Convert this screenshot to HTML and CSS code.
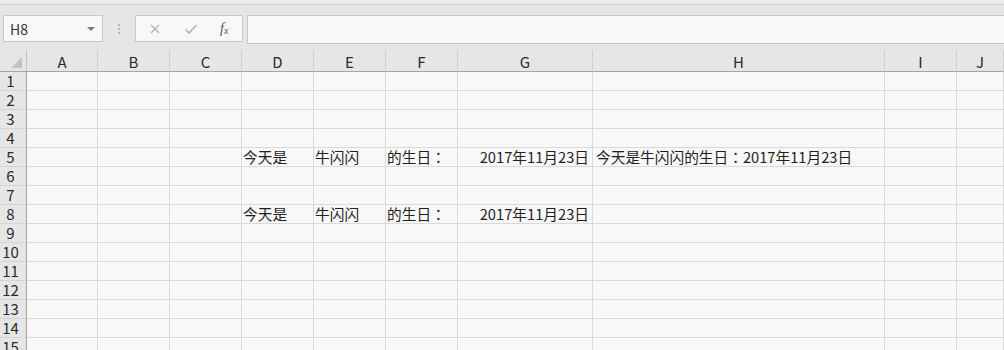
FILE: index.html
```html
<!DOCTYPE html>
<html lang="zh-CN">
<head>
<meta charset="UTF-8">
<title>Sheet1</title>
<link rel="stylesheet" href="styles.css">
</head>
<body>

<div class="top-strip"></div>

<div class="formula-bar">
  <div class="name-box">
    <span>H8</span>
    <span class="caret"></span>
  </div>
  <div class="grip">
    <span></span><span></span><span></span>
  </div>
  <div class="fx-box">
    <svg class="icon" width="12" height="12" viewBox="0 0 12 12">
      <path d="M2 2 L10 10 M10 2 L2 10" stroke="#b3b3b3" stroke-width="1.3" fill="none"/>
    </svg>
    <svg class="icon" width="14" height="12" viewBox="0 0 14 12">
      <path d="M1.5 6.5 L5 10 L12.5 2" stroke="#b3b3b3" stroke-width="1.6" fill="none"/>
    </svg>
    <span class="fx">f<sub>x</sub></span>
  </div>
  <div class="formula-input"></div>
</div>

<div class="sheet" id="sheet"></div>

<script>
  const sheet = document.getElementById('sheet');
  const cols = ['A', 'B', 'C', 'D', 'E', 'F', 'G', 'H', 'I', 'J'];

  // cell contents by address
  const data = {
    D5: '今天是', E5: '牛闪闪', F5: '的生日：', G5: '2017年11月23日', H5: '今天是牛闪闪的生日：2017年11月23日',
    D8: '今天是', E8: '牛闪闪', F8: '的生日：', G8: '2017年11月23日'
  };

  // header row
  const corner = document.createElement('div');
  corner.className = 'corner';
  corner.innerHTML = '<span class="tri"></span>';
  sheet.appendChild(corner);
  cols.forEach(c => {
    const h = document.createElement('div');
    h.className = 'col-head';
    h.textContent = c;
    sheet.appendChild(h);
  });

  for (let r = 1; r <= 15; r++) {
    const rh = document.createElement('div');
    rh.className = 'row-head';
    rh.textContent = r;
    sheet.appendChild(rh);
    cols.forEach(c => {
      const cell = document.createElement('div');
      cell.className = 'cell';
      const v = data[c + r];
      if (v) {
        // full-width colon sits centred, as in the sheet's font
        v.split('：').forEach((part, i) => {
          if (i > 0) {
            const p = document.createElement('span');
            p.className = 'punct';
            p.textContent = '：';
            cell.appendChild(p);
          }
          cell.appendChild(document.createTextNode(part));
        });
        if (c === 'G') cell.classList.add('num');
        if (c === 'H') cell.classList.add('spill');
      }
      sheet.appendChild(cell);
    });
  }
</script>

</body>
</html>
```

FILE: styles.css
```css
body {
  margin: 0;
  background-color: #e6e6e6;
  font-family: "Noto Sans CJK SC", "Liberation Sans", sans-serif;
  color: #1f1f1f;
  overflow: hidden;
}

.top-strip {
  height: 4px;
  background-color: #ececec;
  border-bottom: 1px solid #d0d0d0;
}

.formula-bar {
  display: flex;
  align-items: flex-start;
  height: 45px;
  padding-top: 10px;
  box-sizing: border-box;
}

.name-box {
  display: flex;
  align-items: center;
  justify-content: space-between;
  width: 100px;
  height: 27px;
  margin-left: 3px;
  padding: 0 7px 0 6px;
  box-sizing: border-box;
  background-color: #f8f8f8;
  border: 1px solid #c8c8c8;
  font-size: 14px;
  color: #333;
}

.caret {
  width: 0;
  height: 0;
  border-left: 4px solid transparent;
  border-right: 4px solid transparent;
  border-top: 4px solid #7a7a7a;
}

.grip {
  display: flex;
  flex-direction: column;
  justify-content: center;
  gap: 2px;
  width: 32px;
  height: 27px;
  align-items: center;
}

.grip span {
  width: 2px;
  height: 2px;
  background-color: #b5b5b5;
}

.fx-box {
  display: flex;
  align-items: center;
  width: 108px;
  height: 27px;
  box-sizing: border-box;
  padding-left: 13px;
  gap: 23px;
  background-color: #f8f8f8;
  border: 1px solid #c8c8c8;
}

.fx {
  font-family: "Liberation Serif", serif;
  font-style: italic;
  font-size: 14px;
  color: #555;
  margin-left: -1px;
}

.fx sub {
  font-size: 10px;
  vertical-align: -1px;
}

.formula-input {
  flex: 1;
  height: 27px;
  margin-left: 4px;
  background-color: #f8f8f8;
  border: 1px solid #c8c8c8;
  border-right: none;
}

.sheet {
  display: grid;
  grid-template-columns: 27px 71px 72px 72px 72px 72px 72px 135px 292px 72px 1fr;
  grid-template-rows: 22px;
  grid-auto-rows: 19px;
  background-color: #f8f8f8;
}

.corner,
.col-head {
  background-color: #e6e6e6;
  border-bottom: 1px solid #a6a6a6;
  border-right: 1px solid #d0d0d0;
  box-sizing: border-box;
}

.corner {
  position: relative;
  border-right-color: #c4c4c4;
}

.corner .tri {
  position: absolute;
  right: 4px;
  bottom: 3px;
  width: 0;
  height: 0;
  border-left: 11px solid transparent;
  border-bottom: 11px solid #c2c2c2;
}

.col-head {
  display: flex;
  align-items: flex-end;
  justify-content: center;
  font-size: 15px;
  line-height: 19px;
  color: #2a2a2a;
}

.row-head {
  display: flex;
  align-items: flex-end;
  justify-content: center;
  padding-right: 5px;
  background-color: #e6e6e6;
  border-right: 1px solid #a6a6a6;
  border-bottom: 1px solid #d4d4d4;
  box-sizing: border-box;
  font-size: 15px;
  line-height: 18px;
  color: #2a2a2a;
}

.cell {
  display: flex;
  align-items: flex-end;
  padding: 0 2px 0 1px;
  border-right: 1px solid #d9d9d9;
  border-bottom: 1px solid #d9d9d9;
  box-sizing: border-box;
  font-size: 14.7px;
  line-height: 18px;
  white-space: nowrap;
}

.cell .punct {
  font-family: "Noto Sans CJK TC", sans-serif;
}

.cell.num {
  justify-content: flex-end;
  padding-right: 3px;
}

.cell.spill {
  padding-left: 3px;
}
```
